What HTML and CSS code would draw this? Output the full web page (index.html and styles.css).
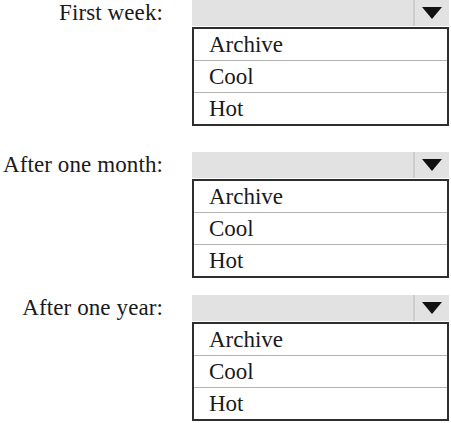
FILE: index.html
```html
<!DOCTYPE html>
<html lang="en">
<head>
    <meta charset="UTF-8">
    <meta name="viewport" content="width=device-width, initial-scale=1.0">
    <title>Storage tiers</title>
    <link rel="stylesheet" href="styles.css">
</head>
<body>

    <div class="form">
        <div class="group">
            <div class="label">First week:</div>
            <div class="select">
                <div class="bar">
                    <span class="arrow"><svg width="20" height="12" viewBox="0 0 20 12"><polygon points="0,0 20,0 10,12" fill="#111"/></svg></span>
                </div>
                <ul class="options">
                    <li>Archive</li>
                    <li>Cool</li>
                    <li>Hot</li>
                </ul>
            </div>
        </div>

        <div class="group month">
            <div class="label">After one month:</div>
            <div class="select">
                <div class="bar">
                    <span class="arrow"><svg width="20" height="12" viewBox="0 0 20 12"><polygon points="0,0 20,0 10,12" fill="#111"/></svg></span>
                </div>
                <ul class="options">
                    <li>Archive</li>
                    <li>Cool</li>
                    <li>Hot</li>
                </ul>
            </div>
        </div>

        <div class="group year">
            <div class="label">After one year:</div>
            <div class="select">
                <div class="bar">
                    <span class="arrow"><svg width="20" height="12" viewBox="0 0 20 12"><polygon points="0,0 20,0 10,12" fill="#111"/></svg></span>
                </div>
                <ul class="options">
                    <li>Archive</li>
                    <li>Cool</li>
                    <li>Hot</li>
                </ul>
            </div>
        </div>
    </div>

</body>
</html>
```

FILE: styles.css
```css
/* General Styles */
body {
    font-family: 'Liberation Serif', 'Times New Roman', serif;
    font-size: 23px;
    color: #1a1a1a;
    background-color: #ffffff;
    margin: 0;
    padding: 0;
}

.form {
    width: 449px;
}

.group {
    display: flex;
    align-items: flex-start;
}

.group.month {
    margin-top: 26px;
}

.group.year {
    margin-top: 17px;
}

.label {
    width: 163px;
    height: 26px;
    line-height: 26px;
    text-align: right;
    white-space: nowrap;
    margin-right: 29px;
    letter-spacing: 0.1px;
}

.select {
    flex: 1;
}

/* closed dropdown bar */
.bar {
    height: 26px;
    background-color: #e2e2e2;
    display: flex;
    justify-content: flex-end;
}

.arrow {
    width: 34px;
    border-left: 2px solid #cdcdcd;
    display: flex;
    align-items: center;
    justify-content: center;
}

/* option list */
.options {
    list-style: none;
    margin: 1px 0 0;
    padding: 0;
    border: 2px solid #2e2e2e;
}

.options li {
    height: 31px;
    line-height: 31px;
    padding-left: 15px;
    border-top: 1px solid #b4b4b4;
}

.options li:first-child {
    border-top: none;
}
```
